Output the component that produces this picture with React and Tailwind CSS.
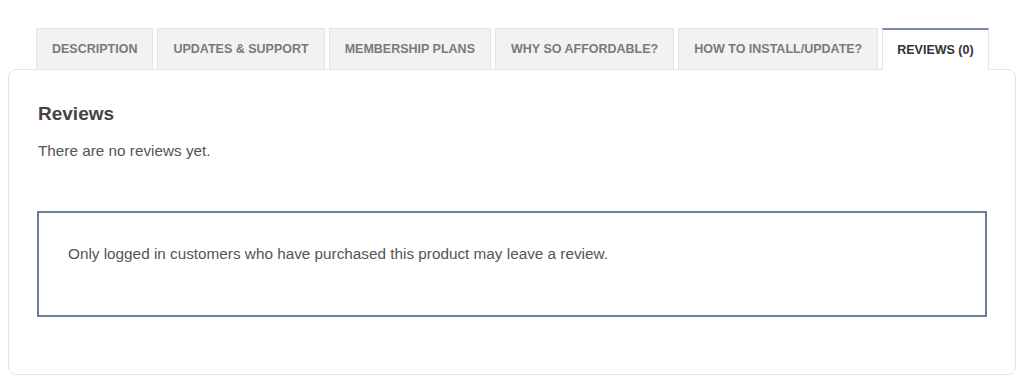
const tabs = [
  "Description",
  "Updates & Support",
  "Membership Plans",
  "Why So Affordable?",
  "How To Install/Update?",
  "Reviews (0)",
];

export default function App() {
  const active = tabs.length - 1;
  return (
    <div className="min-h-[382px] bg-white pt-[28px] font-['Liberation_Sans',Arial,sans-serif]">
      <div className="mx-[8px] w-[1008px]">
        {/* tab strip */}
        <ul className="relative z-10 ml-[28px] flex gap-[4px]">
          {tabs.map((t, i) =>
            i === active ? (
              <li
                key={t}
                className="-mb-px flex h-[42px] items-center border-x border-t-2 border-x-[#e6e6e6] border-t-[#7b89a3] bg-white px-[14px] text-[12.5px] font-bold uppercase text-[#333]"
              >
                {t}
              </li>
            ) : (
              <li
                key={t}
                className="flex h-[41px] items-center border border-b-0 border-[#e4e4e4] bg-[#f2f2f2] px-[15px] text-[12.5px] font-bold uppercase text-[#7a7a7a]"
              >
                {t}
              </li>
            )
          )}
        </ul>

        {/* panel */}
        <div className="rounded-[8px] border border-[#e6e6e6] bg-white px-[28px] pt-[33px] pb-[57px]">
          <h2 className="ml-px text-[19px] leading-[22px] font-bold text-[#444]">Reviews</h2>
          <p className="ml-px mt-[16px] text-[15.3px] leading-[20px] text-[#555]">There are no reviews yet.</p>

          <div className="mt-[50px] border-2 border-[#6d7e9c] px-[29px] pt-[31px] pb-[51px]">
            <p className="text-[15.3px] leading-[20px] text-[#555]">
              Only logged in customers who have purchased this product may leave a review.
            </p>
          </div>
        </div>
      </div>
    </div>
  );
}
